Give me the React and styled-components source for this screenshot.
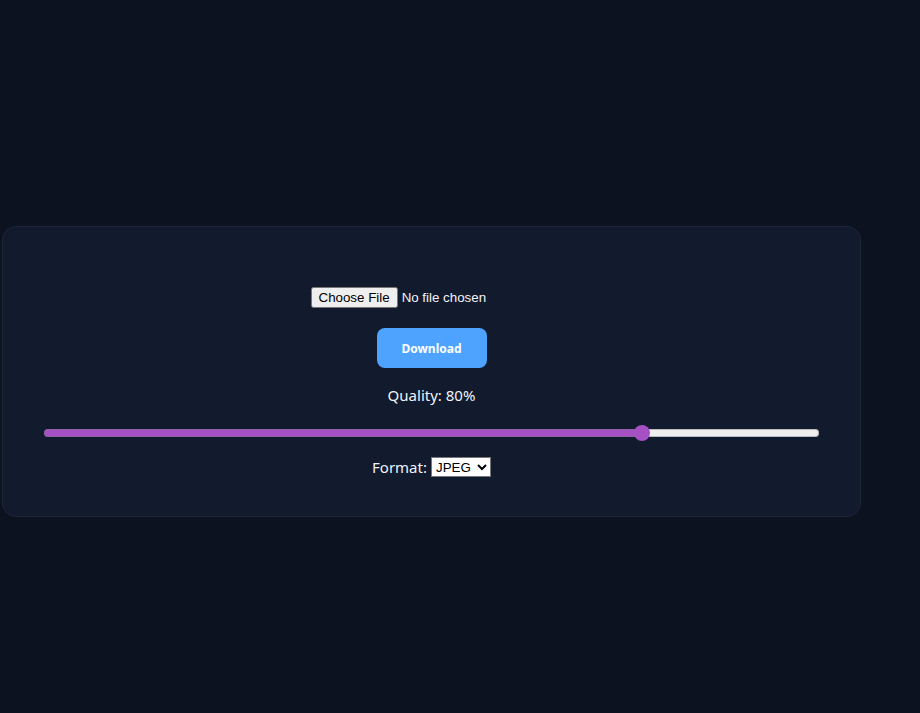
import React, { useState } from 'react';
import styled, { createGlobalStyle } from 'styled-components';

const GlobalStyle = createGlobalStyle`
html, body {
  margin: 0;
  background: #0c121f;
}
body {
  font-family: "Noto Sans", "Open Sans", sans-serif;
}
`;

const Page = styled.div`
min-height: 100vh;
padding: 226px 0 0 2px;
box-sizing: border-box;
`;

const Card = styled.section`
width: 859px;
height: 291px;
box-sizing: border-box;
background: #121a2e;
border: 1px solid #1d2638;
border-radius: 14px;
padding: 60px 41px 0;
display: flex;
flex-direction: column;
align-items: center;
color: #f1f3f7;
`;

const FileInput = styled.input`
font-family: "Liberation Sans", Arial, sans-serif;
font-size: 13.33px;
color: #f1f3f7;
width: 242px;
`;

const DownloadButton = styled.button`
margin-top: 20px;
width: 110px;
height: 40px;
border: none;
border-radius: 8px;
background: #4da3ff;
color: #fff;
font-family: "Noto Sans", "Open Sans", sans-serif;
font-weight: 700;
font-size: 12px;
cursor: pointer;
`;

const Label = styled.label`
font-size: 15px;
line-height: 22px;
`;

const QualityLabel = styled(Label)`
margin-top: 16px;
`;

const Slider = styled.input`
-webkit-appearance: none;
appearance: none;
margin: 23px 0 0;
width: 100%;
height: 8px;
border-radius: 4px;
box-shadow: inset 0 0 0 1px rgba(120, 120, 120, 0.45);
outline: none;

&::-webkit-slider-thumb {
  -webkit-appearance: none;
  appearance: none;
  width: 16px;
  height: 16px;
  border-radius: 50%;
  background: #a551c4;
  border: none;
}
`;

const FormatRow = styled.div`
margin-top: 19px;
display: flex;
align-items: center;
gap: 4px;
`;

const Select = styled.select`
font-family: "Liberation Sans", Arial, sans-serif;
font-size: 13.33px;
background: #fff;
color: #000;
width: 60px;
height: 20px;
`;

export default function App() {
  const [quality, setQuality] = useState(80);
  const [format, setFormat] = useState('jpeg');
  const min = 10;
  const max = 100;
  // fill stops at the thumb centre (thumb is 16px wide)
  const ratio = (quality - min) / (max - min);
  const stop = `calc(8px + (100% - 16px) * ${ratio})`;
  return (
    <>
      <GlobalStyle />
      <Page>
        <Card>
          <FileInput type="file" accept="image/*" />
          <DownloadButton>Download</DownloadButton>
          <QualityLabel>Quality: {quality}%</QualityLabel>
          <Slider
            type="range"
            min={min}
            max={max}
            value={quality}
            style={{ background: `linear-gradient(to right, #a551c4 ${stop}, #efefef ${stop})` }}
            onChange={(e) => setQuality(Number(e.target.value))}
          />
          <FormatRow>
            <Label>Format:</Label>
            <Select value={format} onChange={(e) => setFormat(e.target.value)}>
              <option value="jpeg">JPEG</option>
              <option value="png">PNG</option>
              <option value="webp">WEBP</option>
            </Select>
          </FormatRow>
        </Card>
      </Page>
    </>
  );
}
